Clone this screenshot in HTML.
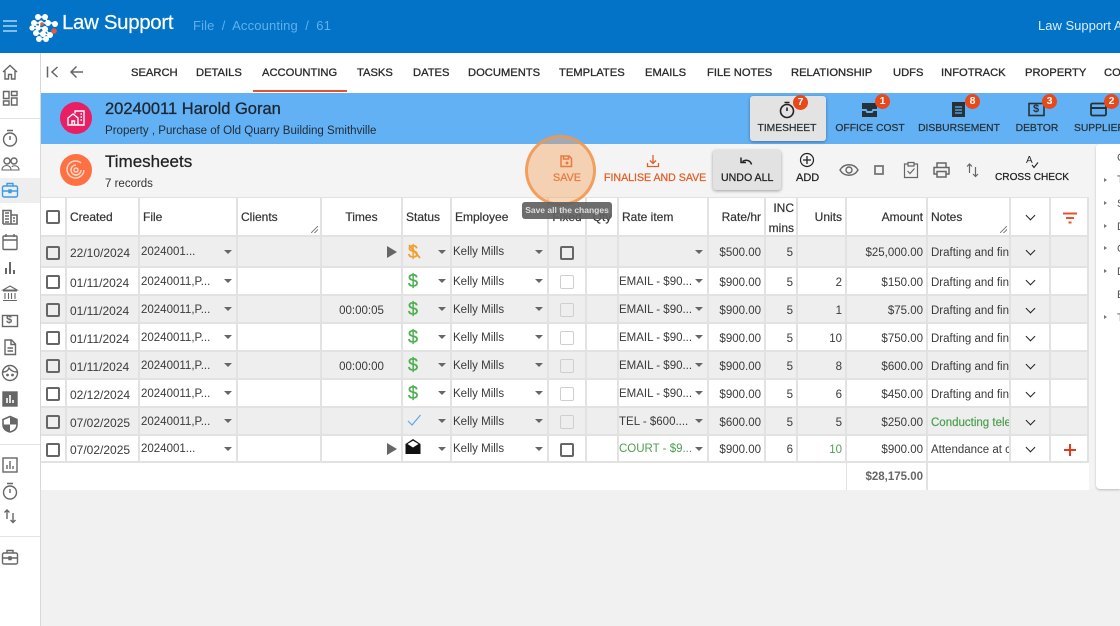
<!DOCTYPE html>
<html><head><meta charset="utf-8"><title>Timesheets</title>
<style>
*{box-sizing:border-box}
html,body{margin:0;padding:0}
html{background:#f1f1f1}
body{width:1120px;height:626px;overflow:hidden;position:relative;background:#f4f4f4;font-family:"Liberation Sans",sans-serif;color:#333;font-size:12px;filter:blur(.3px)}
.p{position:absolute;white-space:nowrap}
svg{position:absolute;overflow:visible;fill:none;stroke:#666;stroke-width:1.4}
#top{left:0;top:0;width:1120px;height:53px;background:#0273c6}
#side{left:0;top:53px;width:41px;height:573px;background:#fff;border-right:1px solid #d8d8d8}
#tabs{left:41px;top:53px;width:1079px;height:40px;background:#fff}
#band{left:41px;top:93px;width:1079px;height:51px;background:#63b1f5}
.tab{top:67px;font-size:11.2px;color:#2a2a2a;-webkit-text-stroke:.3px #2a2a2a}
.hb{top:123px;font-size:10.3px;color:#263238;text-align:center;-webkit-text-stroke:.25px #263238;transform:translateX(-50%)}
.bd{width:15px;height:15px;border-radius:50%;background:#e8481a;color:#fff;font-size:10.5px;font-weight:700;text-align:center;line-height:15px}
.tb{top:172px;font-size:10.6px;-webkit-text-stroke:.25px currentColor}
table{position:absolute;left:41px;top:197px;width:1048px;border-collapse:separate;border-spacing:0;table-layout:fixed;font-size:11.5px;color:#3a3a3a;background:#fff}
td,th{padding:3px 3px 0;border-right:2px solid #e2e2e2;border-bottom:2px solid #e2e2e2;white-space:nowrap;overflow:hidden;position:relative;text-align:left;font-weight:400;vertical-align:middle}
th{font-size:12px;color:#333;-webkit-text-stroke:.2px #333;border-top:1px solid #e2e2e2;height:40px;padding-top:1px}
tr.g td{background:#eee}
tr.r{height:28px}
.R{text-align:right}.C{text-align:center}
.dt{font-size:12px;padding-left:3px;padding-right:0}
.cb{display:block;width:14px;height:14px;border:2px solid #666;border-radius:2px;margin:-1px auto 0;background:#fff}
th .cb{margin-top:0}
tr.g .cb{background:#eee}
.dis{border:1.5px solid #cfcfcf}
.f{padding-left:1px}
td.q{padding-left:0}
.a{position:absolute;right:4px;top:50%;margin-top:-2px;border-left:4px solid transparent;border-right:4px solid transparent;border-top:4px solid #666}
.sel{position:relative;top:-1px}
.d{font-size:18px;color:#4caf50;-webkit-text-stroke:.3px #4caf50;position:absolute;left:5px;top:1px;line-height:24px}
.ch{display:block;width:8px;height:8px;margin:-2px auto 0;position:relative}
th .ch{margin-top:0}
.ch:before{content:"";position:absolute;left:.5px;top:-1px;width:6px;height:6px;border-right:1.9px solid #222;border-bottom:1.9px solid #222;transform:rotate(45deg)}
.gr{color:#4c9f50}
.play{position:absolute;right:4px;top:50%;margin-top:-6px;border-left:10px solid #666;border-top:6px solid transparent;border-bottom:6px solid transparent}
.rs{position:absolute;right:2px;bottom:2px;width:7px;height:7px;background:linear-gradient(135deg,transparent 45%,#888 45%,#888 55%,transparent 55%,transparent 70%,#888 70%,#888 80%,transparent 80%)}
#panel{left:1096px;top:144px;width:24px;height:345px;background:#fff;border-radius:4px 0 0 4px;box-shadow:0 1px 2px #bbb;overflow:hidden}
#panel i{position:absolute;left:8px;border-left:3px solid #777;border-top:2.5px solid transparent;border-bottom:2.5px solid transparent}
#panel span{position:absolute;left:21px;font-size:11px;color:#555}
</style></head><body>
<div class="p" id="top"></div>
<div class="p" id="side"></div>
<div class="p" style="left:0;top:178px;width:40px;height:25px;background:#eee"></div>
<div class="p" style="left:0;top:118px;width:40px;height:1px;background:#e2e2e2"></div>
<div class="p" style="left:0;top:444px;width:40px;height:1px;background:#e2e2e2"></div>
<div class="p" style="left:0;top:536px;width:40px;height:1px;background:#e2e2e2"></div>
<div class="p" id="tabs"></div>
<div class="p" id="band"></div>
<div class="p" style="left:41px;top:489px;width:1079px;height:137px;background:#f1f1f1"></div>

<svg style="left:0;top:0" width="20" height="53"><path d="M3 21h14M3 26h14M3 31h14" stroke="#a9d6f7" stroke-width="1.6"/></svg>
<svg style="left:29px;top:12px" width="32" height="32"><g stroke="#fff" stroke-width="1.400"><path d="M9 5h7M5 11h21M3 16h13M7 21l7 1 7 1M10 27h7M16 5l3 6M5 11l4 5M16 17l5 6M12 11l-3 5"/></g><g fill="#fff" stroke="none"><circle cx="9" cy="5" r="3"/><circle cx="16" cy="5" r="3"/><circle cx="5" cy="11" r="3"/><circle cx="12" cy="11" r="2.500"/><circle cx="19" cy="11" r="3"/><circle cx="26" cy="12" r="3"/><circle cx="3" cy="16" r="2.600"/><circle cx="9" cy="16" r="2.600"/><circle cx="16" cy="17" r="3"/><circle cx="7" cy="21" r="3"/><circle cx="14" cy="22" r="3"/><circle cx="21" cy="23" r="3"/><circle cx="10" cy="27" r="3"/><circle cx="17" cy="27" r="3"/></g><circle cx="25" cy="19" r="2.800" fill="#e9573f" stroke="none"/><circle cx="13" cy="12" r="1.800" fill="#e9573f" stroke="none"/></svg>
<div class="p" style="left:62px;top:12px;font-size:20.4px;color:#fff;letter-spacing:-.3px;-webkit-text-stroke:.2px #fff">Law Support</div>
<div class="p" style="left:193px;top:18px;font-size:13px;color:#5fb0ee;letter-spacing:.15px;word-spacing:3.500px">File / Accounting / 61</div>
<div class="p" style="left:1038px;top:18px;font-size:13px;color:#d8eefc">Law Support A</div>

<!-- sidebar icons -->
<svg style="left:1px;top:63px" width="18" height="18"><path d="M2 9l7-6.500L16 9M4 8v8h3.500v-4.500h3V16H14V8"/></svg>
<svg style="left:1px;top:89px" width="18" height="18"><path d="M2.500 2.500h5.500v7h-5.500zM10.500 2.500h5.500v4h-5.500zM10.500 9h5.500v7h-5.500zM2.500 12h5.500v4h-5.500z"/></svg>
<svg style="left:1px;top:129px" width="18" height="18"><circle cx="9" cy="10.500" r="6.500"/><path d="M6 1.500h6M9 7v4"/></svg>
<svg style="left:1px;top:155px" width="18" height="18"><circle cx="6" cy="6" r="3"/><circle cx="13" cy="6" r="3"/><path d="M1 15c0-6 9-6 9 0zM10 15h8c0-5-6-5-7-3" stroke-width="1.100"/></svg>
<svg style="left:1px;top:181px" width="18" height="18"><g stroke="#3d9ae8"><rect x="1.500" y="5" width="15" height="11" rx="1.500"/><path d="M6 5V2.500h6V5M1.500 10h15M8 9h2v2.500H8z"/></g></svg>
<svg style="left:1px;top:208px" width="18" height="18"><path d="M2 16V2.500h8V16M10 7h6v9H2M4 5h4M4 8h4M4 11h4M4 14h4M12 10h2M12 13h2" stroke-width="1.600"/></svg>
<svg style="left:1px;top:233px" width="18" height="18"><rect x="2" y="3" width="14" height="13.500" rx="1"/><path d="M2 7h14M5 1v3M13 1v3"/></svg>
<svg style="left:1px;top:259px" width="18" height="18"><path d="M5 15V9M9 15V3M13 15v-4" stroke-width="2"/></svg>
<svg style="left:1px;top:284px" width="18" height="18"><path d="M2 6L9 2l7 4zM2 7h14M4 9v6M7.500 9v6M10.500 9v6M14 9v6M2 16.500h14" stroke-width="1.100"/></svg>
<svg style="left:1px;top:312px" width="18" height="18"><rect x="1.500" y="3.500" width="15" height="11"/></svg>
<div class="p" style="left:6px;top:314px;font-size:11px;color:#666;font-weight:700">$</div>
<svg style="left:1px;top:338px" width="18" height="18"><path d="M4 2h6.500L14.500 6v10.500H4zM10 2v4.500h4.500M6.500 10h5.500M6.500 13h5.500"/></svg>
<svg style="left:1px;top:364px" width="18" height="18"><circle cx="9" cy="9" r="7.500"/><path d="M2 8c3 0 5-1 6-4 2 3 5 4 8 4"/><circle cx="6.500" cy="11" r=".7"/><circle cx="11.500" cy="11" r=".7"/></svg>
<svg style="left:1px;top:390px" width="18" height="18"><rect x="2" y="2" width="14" height="14" fill="#666"/><path d="M6 13V8M9 13V5M12 13v-3" stroke="#fff" stroke-width="1.600"/></svg>
<svg style="left:1px;top:415px" width="18" height="18"><path d="M9 1.500l7 3v5c0 4-3 6.500-7 7.500-4-1-7-3.500-7-7.500v-5z" fill="#fff" stroke-width="1.600"/><path d="M9 1.500l7 3v5H9zM9 9.500v7.500c-4-1-7-3.500-7-7.500z" fill="#666" stroke="none"/></svg>
<svg style="left:1px;top:456px" width="18" height="18"><rect x="2" y="2" width="14" height="14"/><path d="M6 13V9M9 13V5M12 13v-3"/></svg>
<svg style="left:1px;top:482px" width="18" height="18"><circle cx="9" cy="10.500" r="6.500"/><path d="M6 1.500h6M9 7v4"/></svg>
<svg style="left:1px;top:507px" width="18" height="18"><path d="M6 12V3M3.500 5.500L6 3l2.500 2.500M12 6v9.500M9.500 13l2.500 2.500 2.500-2.500"/></svg>
<svg style="left:1px;top:548px" width="18" height="18"><rect x="1.500" y="5" width="15" height="11" rx="1.500"/><path d="M6 5V2.500h6V5M1.500 10h15M8 9h2v2.500H8z"/></svg>

<!-- tabs -->
<svg style="left:46px;top:65px" width="14" height="14"><path d="M1.500 1.500v11M11.500 2L6 7l5.500 5" stroke-width="1.500"/></svg>
<svg style="left:69px;top:65px" width="15" height="14"><path d="M14 7H2M7.500 1.500L2 7l5.500 5.500" stroke-width="1.500"/></svg>
<div class="p tab" style="left:131px">SEARCH</div>
<div class="p tab" style="left:196px">DETAILS</div>
<div class="p tab" style="left:262px">ACCOUNTING</div>
<div class="p" style="left:253px;top:90px;width:94px;height:2px;background:#e5532d"></div>
<div class="p tab" style="left:357px">TASKS</div>
<div class="p tab" style="left:413px">DATES</div>
<div class="p tab" style="left:468px">DOCUMENTS</div>
<div class="p tab" style="left:559px">TEMPLATES</div>
<div class="p tab" style="left:645px">EMAILS</div>
<div class="p tab" style="left:707px">FILE NOTES</div>
<div class="p tab" style="left:791px">RELATIONSHIP</div>
<div class="p tab" style="left:893px">UDFS</div>
<div class="p tab" style="left:941px">INFOTRACK</div>
<div class="p tab" style="left:1025px">PROPERTY</div>
<div class="p tab" style="left:1104px">CO</div>

<!-- matter band -->
<div class="p" style="left:60px;top:102px;width:32px;height:32px;border-radius:50%;background:#e91e63"></div>
<svg style="left:67px;top:110px" width="18" height="16"><path d="M1 8l5-4 5 4v7H1zM5 15v-4h2.500v4M8 3.500V1h9v14h-6M13.500 4h1.500M13.500 7h1.500M13.500 10h1.500" stroke="#fff"/></svg>
<div class="p" style="left:105px;top:100px;font-size:16.500px;color:#1b2733;-webkit-text-stroke:.3px #1b2733">20240011 Harold Goran</div>
<div class="p" style="left:105px;top:125px;font-size:11.550px;color:#1f2b36">Property , Purchase of Old Quarry Building Smithville</div>

<div class="p" style="left:750px;top:96px;width:76px;height:45px;background:#e3e3e3;border-radius:3px;box-shadow:0 1px 3px rgba(0,0,0,.35)"></div>
<svg style="left:778px;top:101px" width="18" height="18"><circle cx="9" cy="10" r="6.500" stroke="#222" stroke-width="1.600"/><path d="M6.500 1.500h5M9 6.500V10" stroke="#222" stroke-width="1.600"/></svg>
<div class="p hb" style="left:787px">TIMESHEET</div>
<div class="p bd" style="left:793px;top:95px">7</div>
<svg style="left:861px;top:102px" width="18" height="16"><path d="M1 1h15v6h-4.500l-1 2h-4l-1-2H1zM1 9h3.500l1 2h6l1-2H16v6H1z" fill="#263238" stroke="none"/></svg>
<div class="p hb" style="left:870px">OFFICE COST</div>
<div class="p bd" style="left:875px;top:94px">1</div>
<svg style="left:951px;top:101px" width="16" height="17"><path d="M1 1h13v15H1z" fill="#263238" stroke="none"/><path d="M4 6h7M4 9h7M4 12h7" stroke="#63b1f5" stroke-width="1.200"/></svg>
<div class="p hb" style="left:959px">DISBURSEMENT</div>
<div class="p bd" style="left:965px;top:94px">8</div>
<svg style="left:1028px;top:102px" width="18" height="15"><rect x="1" y="1.500" width="15" height="12" stroke="#263238" stroke-width="1.600"/></svg>
<div class="p" style="left:1033px;top:103px;font-size:11px;font-weight:700;color:#263238">$</div>
<div class="p hb" style="left:1037px">DEBTOR</div>
<div class="p bd" style="left:1042px;top:94px">3</div>
<svg style="left:1090px;top:102px" width="18" height="15"><rect x="1" y="1.500" width="15" height="12" rx="1.500" stroke="#263238" stroke-width="1.800"/><path d="M1 6h15" stroke="#263238" stroke-width="2"/></svg>
<div class="p hb" style="left:1074px;transform:none">SUPPLIER</div>
<div class="p bd" style="left:1104px;top:94px">2</div>

<!-- toolbar -->
<div class="p" style="left:60px;top:154px;width:32px;height:32px;border-radius:50%;background:#ff7043"></div>
<svg style="left:66px;top:160px" width="20" height="20"><g stroke="#ffd5c4" stroke-width="1.500"><circle cx="10" cy="10" r="2"/><path d="M10 5a5 5 0 1 0 5 5M15 3a8.500 8.500 0 1 0 3 7"/></g></svg>
<div class="p" style="left:105px;top:152px;font-size:17px;color:#222;-webkit-text-stroke:.25px #222">Timesheets</div>
<div class="p" style="left:105px;top:178px;font-size:11.500px;color:#333">7 records</div>

<svg style="left:559px;top:154px" width="14" height="14"><path d="M2 2h8l2.500 2.500V12.500H2zM4.500 2v3h5V2" stroke="#e0602a" stroke-width="1.500"/><circle cx="8" cy="9" r="1.500" fill="#e0602a" stroke="none"/></svg>
<div class="p tb" style="left:553px;color:#e0602a;font-size:10.800px">SAVE</div>
<svg style="left:646px;top:154px" width="14" height="14"><path d="M7 1v8M4 6.500L7 9.500 10 6.500M1.500 9v3.500h11V9" stroke="#e0602a" stroke-width="1.300"/></svg>
<div class="p tb" style="left:604px;color:#e0602a">FINALISE AND SAVE</div>
<div class="p" style="left:713px;top:150px;width:68px;height:40px;background:#e2e2e2;border-radius:3px;box-shadow:0 1px 3px rgba(0,0,0,.35)"></div>
<svg style="left:739px;top:155px" width="14" height="12"><path d="M12.500 9.500C11.500 5.500 7 4 3.500 6.500M2 2.500v5h5" stroke="#222" stroke-width="1.500"/></svg>
<div class="p tb" style="left:721px;color:#222">UNDO ALL</div>
<svg style="left:799px;top:152px" width="16" height="16"><circle cx="8" cy="8" r="6.500" stroke="#222" stroke-width="1.200"/><path d="M8 4v8M4 8h8" stroke="#222" stroke-width="1.300"/></svg>
<div class="p tb" style="left:796px;top:172px;color:#222;font-size:11px">ADD</div>
<svg style="left:839px;top:162px" width="20" height="16"><path d="M1 8c4-7 14-7 18 0-4 7-14 7-18 0z"/><circle cx="10" cy="8" r="3"/></svg>
<svg style="left:873px;top:164px" width="12" height="12"><rect x="2" y="2" width="8" height="8" stroke="#777" stroke-width="1.800"/></svg>
<svg style="left:903px;top:161px" width="16" height="18"><path d="M5 3H1.500v13.500h13V3H11M5 1.500h6V5H5zM4.500 10l2.500 2.500L11.500 7.500" stroke-width="1.200"/></svg>
<svg style="left:933px;top:162px" width="17" height="16"><path d="M4 5V1h9v4M4 12H1V5.500h15V12h-3M4 9.500h9V15H4z" stroke-width="1.500"/></svg>
<svg style="left:965px;top:162px" width="15" height="16"><path d="M4.500 11V2M2 4.500L4.500 2 7 4.500M10.500 5v9.500M8 12l2.500 2.500L13 12" stroke-width="1.200"/></svg>
<div class="p" style="left:1026px;top:155px;font-size:10px;color:#222">A</div>
<svg style="left:1031px;top:162px" width="8" height="7"><path d="M1 3l2 2.500L7 .5" stroke="#222" stroke-width="1.100"/></svg>
<div class="p tb" style="left:995px;color:#222;font-size:10.100px">CROSS CHECK</div>

<!-- grid -->
<table>
<colgroup><col style="width:26px"><col style="width:73px"><col style="width:98px"><col style="width:84px"><col style="width:81px"><col style="width:49px"><col style="width:97px"><col style="width:38px"><col style="width:32px"><col style="width:90px"><col style="width:57px"><col style="width:32px"><col style="width:49px"><col style="width:81px"><col style="width:83px"><col style="width:40px"><col style="width:38px"></colgroup>
<tr>
<th><i class="cb"></i></th><th>Created</th><th>File</th><th>Clients<b class="rs"></b></th><th class="C">Times</th><th>Status</th><th>Employee</th><th class="C">Fixed</th><th class="C">Qty</th><th>Rate item</th><th class="R">Rate/hr</th><th class="R" style="padding:0 2px 0 0"><div style="height:37px;line-height:20px;margin-top:-1px">INC<br>mins</div></th><th class="R">Units</th><th class="R">Amount</th><th>Notes<b class="rs"></b></th><th><i class="ch"></i></th><th><svg style="left:11px;top:14px" width="16" height="12"><path d="M1 1.500h14M4 6h8M6.500 10.500h3" stroke="#e5532d" stroke-width="2"/></svg></th>
</tr>
<tr class="g" style="height:31px"><td><i class="cb"></i></td><td class="dt">22/10/2024</td><td class="f"><span class="sel">2024001...</span><b class="a"></b></td><td></td><td><b class="play"></b></td><td><span class="d" style="color:#f0a030;-webkit-text-stroke:.3px #f0a030;top:3px">$</span><svg style="left:5px;top:7px" width="16" height="18"><path d="M1 1l11 13" stroke="#f0a030" stroke-width="1.800"/></svg><b class="a"></b></td><td class="f"><span class="sel">Kelly Mills</span><b class="a"></b></td><td><i class="cb"></i></td><td></td><td class="f q"><b class="a"></b></td><td class="R">$500.00</td><td class="R">5</td><td></td><td class="R">$25,000.00</td><td>Drafting and fin</td><td><i class="ch"></i></td><td></td></tr>
<tr class="r"><td><i class="cb"></i></td><td class="dt">01/11/2024</td><td class="f"><span class="sel">20240011,P...</span><b class="a"></b></td><td></td><td></td><td><span class="d">$</span><b class="a"></b></td><td class="f"><span class="sel">Kelly Mills</span><b class="a"></b></td><td><i class="cb dis"></i></td><td></td><td class="f q"><span class="sel">EMAIL - $90...</span><b class="a"></b></td><td class="R">$900.00</td><td class="R">5</td><td class="R">2</td><td class="R">$150.00</td><td>Drafting and fin</td><td><i class="ch"></i></td><td></td></tr>
<tr class="g r"><td><i class="cb"></i></td><td class="dt">01/11/2024</td><td class="f"><span class="sel">20240011,P...</span><b class="a"></b></td><td></td><td class="C">00:00:05</td><td><span class="d">$</span><b class="a"></b></td><td class="f"><span class="sel">Kelly Mills</span><b class="a"></b></td><td><i class="cb dis"></i></td><td></td><td class="f q"><span class="sel">EMAIL - $90...</span><b class="a"></b></td><td class="R">$900.00</td><td class="R">5</td><td class="R">1</td><td class="R">$75.00</td><td>Drafting and fin</td><td><i class="ch"></i></td><td></td></tr>
<tr class="r"><td><i class="cb"></i></td><td class="dt">01/11/2024</td><td class="f"><span class="sel">20240011,P...</span><b class="a"></b></td><td></td><td></td><td><span class="d">$</span><b class="a"></b></td><td class="f"><span class="sel">Kelly Mills</span><b class="a"></b></td><td><i class="cb dis"></i></td><td></td><td class="f q"><span class="sel">EMAIL - $90...</span><b class="a"></b></td><td class="R">$900.00</td><td class="R">5</td><td class="R">10</td><td class="R">$750.00</td><td>Drafting and fin</td><td><i class="ch"></i></td><td></td></tr>
<tr class="g r"><td><i class="cb"></i></td><td class="dt">01/11/2024</td><td class="f"><span class="sel">20240011,P...</span><b class="a"></b></td><td></td><td class="C">00:00:00</td><td><span class="d">$</span><b class="a"></b></td><td class="f"><span class="sel">Kelly Mills</span><b class="a"></b></td><td><i class="cb dis"></i></td><td></td><td class="f q"><span class="sel">EMAIL - $90...</span><b class="a"></b></td><td class="R">$900.00</td><td class="R">5</td><td class="R">8</td><td class="R">$600.00</td><td>Drafting and fin</td><td><i class="ch"></i></td><td></td></tr>
<tr class="r"><td><i class="cb"></i></td><td class="dt">02/12/2024</td><td class="f"><span class="sel">20240011,P...</span><b class="a"></b></td><td></td><td></td><td><span class="d">$</span><b class="a"></b></td><td class="f"><span class="sel">Kelly Mills</span><b class="a"></b></td><td><i class="cb dis"></i></td><td></td><td class="f q"><span class="sel">EMAIL - $90...</span><b class="a"></b></td><td class="R">$900.00</td><td class="R">5</td><td class="R">6</td><td class="R">$450.00</td><td>Drafting and fin</td><td><i class="ch"></i></td><td></td></tr>
<tr class="g r"><td><i class="cb"></i></td><td class="dt">07/02/2025</td><td class="f"><span class="sel">20240011,P...</span><b class="a"></b></td><td></td><td></td><td><svg style="left:4px;top:5px" width="15" height="14"><path d="M1 8l4 4 8.500-10" stroke="#5ba8e6" stroke-width="1.200"/></svg><b class="a"></b></td><td class="f"><span class="sel">Kelly Mills</span><b class="a"></b></td><td><i class="cb dis"></i></td><td></td><td class="f q"><span class="sel">TEL - $600....</span><b class="a"></b></td><td class="R">$600.00</td><td class="R">5</td><td class="R">5</td><td class="R">$250.00</td><td class="gr" style="-webkit-text-stroke:.2px #4c9f50">Conducting tele</td><td><i class="ch"></i></td><td></td></tr>
<tr style="height:27px"><td><i class="cb"></i></td><td class="dt">07/02/2025</td><td class="f"><span class="sel">2024001...</span><b class="a"></b></td><td></td><td><b class="play"></b></td><td><svg style="left:2px;top:3px" width="17" height="16"><path d="M8 0l7.500 5v10h-15V5z" fill="#111" stroke="none"/><path d="M2.500 5L8 1.800 13.500 5 8 8.500z" fill="#fff" stroke="none"/></svg><b class="a"></b></td><td class="f"><span class="sel">Kelly Mills</span><b class="a"></b></td><td><i class="cb"></i></td><td></td><td class="f q"><span class="sel gr">COURT - $9...</span><b class="a"></b></td><td class="R">$900.00</td><td class="R">6</td><td class="R gr">10</td><td class="R">$900.00</td><td>Attendance at c</td><td><i class="ch"></i></td><td><svg style="left:12px;top:7px" width="14" height="14"><path d="M7 1v12M1 7h12" stroke="#e5391e" stroke-width="2"/></svg></td></tr>
<tr style="height:27px"><td colspan="13" style="border-bottom:0;border-right:1px solid #e2e2e2"></td><td class="R" style="font-weight:700;color:#666;border-bottom:0;padding-top:0">$28,175.00</td><td colspan="3" style="border-right:0;border-bottom:0"></td></tr>
</table>

<!-- right panel -->
<div class="p" id="panel">
<span style="top:8px">C</span>
<i style="top:34px"></i><span style="top:30px">T</span>
<i style="top:57px"></i><span style="top:54px">S</span>
<i style="top:80px"></i><span style="top:77px">D</span>
<i style="top:102px"></i><span style="top:99px">C</span>
<i style="top:125px"></i><span style="top:122px">D</span>
<span style="top:145px">E</span>
<i style="top:171px"></i><span style="top:168px">T</span>
</div>

<!-- highlight + tooltip -->
<div class="p" style="left:525px;top:135px;width:71px;height:71px;border-radius:50%;background:rgba(245,160,90,.42);border:3px solid rgba(240,150,80,.85)"></div>
<div class="p" style="left:522px;top:202px;width:90px;height:17px;border-radius:3px;background:rgba(97,97,97,.92);color:#ddd;font-size:8.500px;font-weight:700;text-align:center;line-height:17px">Save all the changes</div>
</body></html>
